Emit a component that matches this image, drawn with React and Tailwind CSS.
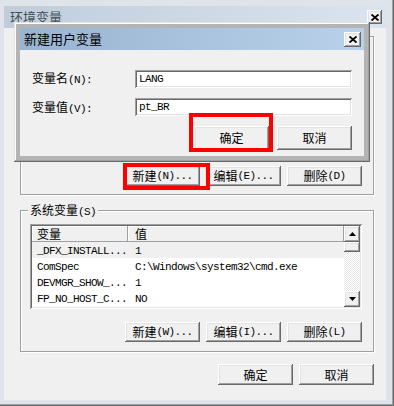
import React from 'react';

const raised = 'shadow-[inset_-1px_-1px_#696969,inset_1px_1px_#ffffff,inset_-2px_-2px_#a0a0a0,inset_2px_2px_#e3e3e3]';
const sunken = 'shadow-[inset_1px_1px_#a0a0a0,inset_-1px_-1px_#ffffff,inset_2px_2px_#696969,inset_-2px_-2px_#e3e3e3]';

const Txt = ({ children }) => {
  const parts = String(children).split(/([\u4e00-\u9fff]+)/).filter(Boolean);
  return parts.map((p, i) =>
    /[\u4e00-\u9fff]/.test(p) ? (
      <span key={i}>{p}</span>
    ) : (
      <span key={i} className="font-['Liberation_Mono',monospace] text-[11px] tracking-[-0.6px] whitespace-pre">
        {p}
      </span>
    )
  );
};

const Btn = ({ children, className = '' }) => (
  <div className={`h-[20px] w-[75px] flex items-center justify-center bg-[#f0f0f0] ${raised} ${className}`}>
    <Txt>{children}</Txt>
  </div>
);

const CloseBtn = ({ className = '' }) => (
  <div className={`flex items-center justify-center bg-[#f0f0f0] ${raised} ${className}`}>
    <svg width="8" height="7" viewBox="0 0 8 7">
      <path d="M0.5 0.5 L7.5 6.5 M7.5 0.5 L0.5 6.5" stroke="#000" strokeWidth="1.8" />
    </svg>
  </div>
);

const Arrow = ({ up }) => (
  <div className={`h-[16px] flex items-center justify-center bg-[#f0f0f0] ${raised}`}>
    <svg width="7" height="4" viewBox="0 0 7 4">
      <polygon points={up ? '3.5,0 7,4 0,4' : '0,0 7,0 3.5,4'} fill="#000" />
    </svg>
  </div>
);

const rows = [
  ['_DFX_INSTALL...', '1'],
  ['ComSpec', 'C:\\Windows\\system32\\cmd.exe'],
  ['DEVMGR_SHOW_...', '1'],
  ['FP_NO_HOST_C...', 'NO'],
];

const VarList = ({ height, items }) => (
  <div className={`bg-white flex p-[2px] ${sunken}`} style={{ height }}>
    <div className="flex-1 flex flex-col overflow-hidden">
      <div className="h-[16px] flex shrink-0">
        <div className="w-[96px] pl-[5px] bg-[#f0f0f0] flex items-center shadow-[inset_-1px_-1px_#a0a0a0,inset_1px_1px_#ffffff]">变量</div>
        <div className="flex-1 pl-[7px] bg-[#f0f0f0] flex items-center shadow-[inset_-1px_-1px_#a0a0a0,inset_1px_1px_#ffffff]">值</div>
      </div>
      {items.map(([k, v], i) => (
        <div key={k} className={`h-[16px] flex items-center shrink-0 ${i === 0 ? 'bg-[#f0f0f0]' : ''}`}>
          <div className="w-[96px] pl-[5px]"><Txt>{k}</Txt></div>
          <div className="flex-1 pl-[7px]"><Txt>{v}</Txt></div>
        </div>
      ))}
    </div>
    <div className="w-[16px] flex flex-col">
      <Arrow up />
      <div className={`h-[10px] bg-[#f0f0f0] ${raised}`} />
      <div className="flex-1 bg-[image:repeating-conic-gradient(#ffffff_0_25%,#e6e6e6_0_50%)] bg-[length:2px_2px]" />
      <Arrow />
    </div>
  </div>
);

const GroupBox = ({ label, className = '', children }) => (
  <div className={`relative ml-[16px] w-[354px] border border-[#a0a0a0] shadow-[1px_1px_#ffffff,inset_1px_1px_#ffffff] ${className}`}>
    <span className="absolute left-[7px] top-[-8px] px-[2px] bg-[#f0f0f0] leading-[14px]">
      <Txt>{label}</Txt>
    </span>
    {children}
  </div>
);

export default function App() {
  return (
    <div className="relative w-[394px] h-[406px] overflow-hidden bg-[#dfe4ea] pl-[4px] pt-[6px] pr-[8px] pb-[6px] flex flex-col font-['Noto_Sans_CJK_SC',sans-serif] text-[12px] text-black shadow-[inset_-1px_-1px_#696969,inset_-2px_-2px_#a0a0a0]">
      {/* outer window title */}
      <div className="h-[22px] shrink-0 flex items-center justify-between pl-[6px] pr-[4px] bg-gradient-to-r from-[#bfcddb] to-[#dbe4ee]">
        <span className="text-[#434e54] text-[13px]">环境变量</span>
        <CloseBtn className="w-[15px] h-[14px]" />
      </div>

      {/* outer client */}
      <div className="flex-1 bg-[#f0f0f0] flex flex-col">
        <GroupBox label="用户变量(U)" className="mt-[8px] h-[159px] pt-[13px] pl-[9px] pr-[11px] pb-[8px] flex flex-col">
          <VarList height={103} items={[]} />
          <div className="mt-[13px] flex justify-end gap-[6px]">
            <Btn>新建(N)...</Btn>
            <Btn>编辑(E)...</Btn>
            <Btn>删除(D)</Btn>
          </div>
        </GroupBox>

        <GroupBox label="系统变量(S)" className="mt-[15px] h-[142px] pt-[13px] pl-[9px] pr-[11px] pb-[9px] flex flex-col">
          <VarList height={85} items={rows} />
          <div className="mt-[13px] flex justify-end gap-[6px]">
            <Btn>新建(W)...</Btn>
            <Btn>编辑(I)...</Btn>
            <Btn>删除(L)</Btn>
          </div>
        </GroupBox>

        <div className="mt-[12px] flex justify-end gap-[6px] pr-[12px]">
          <Btn className="h-[21px]">确定</Btn>
          <Btn className="h-[21px]">取消</Btn>
        </div>
      </div>

      {/* new user variable dialog */}
      <div className="absolute left-[14px] top-[22px] w-[356px] h-[140px] bg-[#b4b4b4] p-[6px] flex flex-col shadow-[inset_-1px_-1px_#696969,inset_1px_1px_#e3e3e3,inset_-2px_-2px_#a0a0a0,inset_2px_2px_#ffffff]">
        <div className="h-[22px] shrink-0 flex items-center justify-between pl-[4px] pr-[3px] bg-gradient-to-r from-[#99b4d1] to-[#b9d1ea]">
          <span className="text-[13px]">新建用户变量</span>
          <CloseBtn className="w-[17px] h-[15px]" />
        </div>
        <div className="flex-1 bg-[#f0f0f0] flex flex-col pl-[12px] pr-[12px]">
          <div className="mt-[19px] flex items-center">
            <span className="w-[103px]"><Txt>变量名(N):</Txt></span>
            <div className={`flex-1 h-[18px] bg-white flex items-center pl-[4px] ${sunken}`}><Txt>LANG</Txt></div>
          </div>
          <div className="mt-[9px] flex items-center">
            <span className="w-[103px]"><Txt>变量值(V):</Txt></span>
            <div className={`flex-1 h-[18px] bg-white flex items-center pl-[4px] ${sunken}`}><Txt>pt_BR</Txt></div>
          </div>
          <div className="mt-[9px] flex justify-end gap-[8px]">
            <Btn className="h-[24px] w-[74px]">确定</Btn>
            <Btn className="h-[24px]">取消</Btn>
          </div>
        </div>
      </div>

      {/* red highlight boxes */}
      <div className="absolute left-[189px] top-[113px] w-[84px] h-[39px] border-[4px] border-[#ff0000]" />
      <div className="absolute left-[123px] top-[163px] w-[87px] h-[27px] border-[4px] border-[#ff0000]" />
    </div>
  );
}
